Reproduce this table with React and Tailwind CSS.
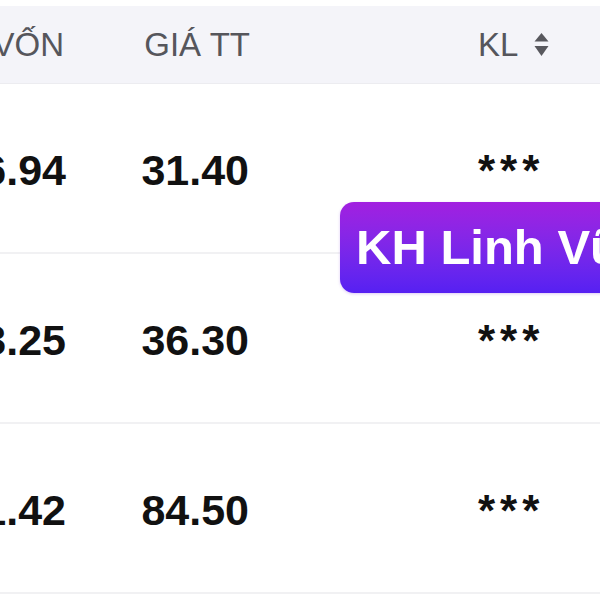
import React from "react";

const rows = [
  { von: "26.94", gia: "31.40" },
  { von: "23.25", gia: "36.30" },
  { von: "41.42", gia: "84.50" },
];

function SortIcon() {
  return (
    <svg width="15" height="24" viewBox="0 0 15 24" className="block">
      <path d="M7.5 0 L14.5 8.5 L0.5 8.5 Z" fill="#58585e" />
      <path d="M0.5 13 L14.5 13 L7.5 23 Z" fill="#58585e" />
    </svg>
  );
}

export default function App() {
  return (
    <div
      className="relative w-[600px] h-[600px] overflow-hidden bg-white"
      style={{ fontFamily: '"Liberation Sans", Arial, sans-serif' }}
    >
      <div className="h-[6px]" />
      <div className="flex items-center h-[78px] bg-[#f4f4f9] border-b border-[#ececf0] text-[33px] text-[#56565c] whitespace-nowrap">
        <div className="w-[64px] shrink-0 flex justify-end">GIÁ VỐN</div>
        <div className="w-[186px] shrink-0 flex justify-end">GIÁ TT</div>
        <div className="ml-[228px] flex items-center gap-[16px]">
          <span>KL</span>
          <SortIcon />
        </div>
      </div>
      {rows.map((r, i) => (
        <div
          key={i}
          className="flex items-center h-[170px] pt-[5px] border-b-2 border-[#f1f1f3] text-[43px] font-bold text-[#111] whitespace-nowrap"
        >
          <div className="w-[66px] shrink-0 flex justify-end">{r.von}</div>
          <div className="w-[183px] shrink-0 flex justify-end">{r.gia}</div>
          <div className="ml-[229px] tracking-[5px] text-[44px]">***</div>
        </div>
      ))}
      <div className="absolute left-[340px] top-[202px] h-[91px] w-[320px] rounded-[14px] bg-gradient-to-b from-[#a21fe0] to-[#5620f2] flex items-center pl-[16px] shadow-[0_1px_3px_rgba(120,40,220,0.25)]">
        <span className="text-white font-bold text-[49px] whitespace-nowrap leading-none">
          KH Linh Vũ
        </span>
      </div>
    </div>
  );
}
